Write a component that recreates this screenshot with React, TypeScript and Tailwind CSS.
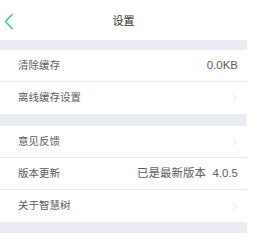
import { ChevronRight } from 'lucide-react';

interface RowProps {
  label: string;
  value?: string;
  arrow?: boolean;
  last?: boolean;
}

function Row({ label, value, arrow, last }: RowProps) {
  return (
    <div className={`flex h-[32px] items-center justify-between pl-[18px] pr-[9px] bg-white ${last ? '' : 'border-b border-[#ebebeb]'}`}>
      <span className="text-[10.5px] text-[#5c5c5c]">{label}</span>
      {value && <span className="whitespace-pre text-[11.5px] text-[#5c5c5c]">{value}</span>}
      {arrow && <ChevronRight size={13} strokeWidth={1.1} className="-mr-[3px] text-[#cfcfcf]" />}
    </div>
  );
}

export default function App() {
  return (
    <div className="w-[255px] h-[243px] overflow-hidden bg-white" style={{ fontFamily: '"Liberation Sans", "Noto Sans CJK SC", sans-serif' }}>
      <div className="w-[247px]">
        {/* Header */}
        <div className="relative flex h-[40px] items-center justify-center pt-[3px] bg-white">
          <svg className="absolute left-[4px] top-[13px]" width="10" height="17" viewBox="0 0 10 17">
            <path d="M8.5 1 L1.5 8.5 L8.5 16" fill="none" stroke="#2fc59f" strokeWidth="1.4" />
          </svg>
          <span className="text-[11px] text-[#333]">设置</span>
        </div>
        <div className="h-[10px] bg-[#e9edf2]" />
        <Row label="清除缓存" value="0.0KB" />
        <Row label="离线缓存设置" arrow last />
        <div className="h-[12px] bg-[#e9edf2]" />
        <Row label="意见反馈" arrow />
        <Row label="版本更新" value="已是最新版本  4.0.5" />
        <Row label="关于智慧树" arrow last />
        <div className="h-[11px] bg-[#e9edf2]" />
        <div className="h-[32px] bg-white" />
      </div>
    </div>
  );
}
